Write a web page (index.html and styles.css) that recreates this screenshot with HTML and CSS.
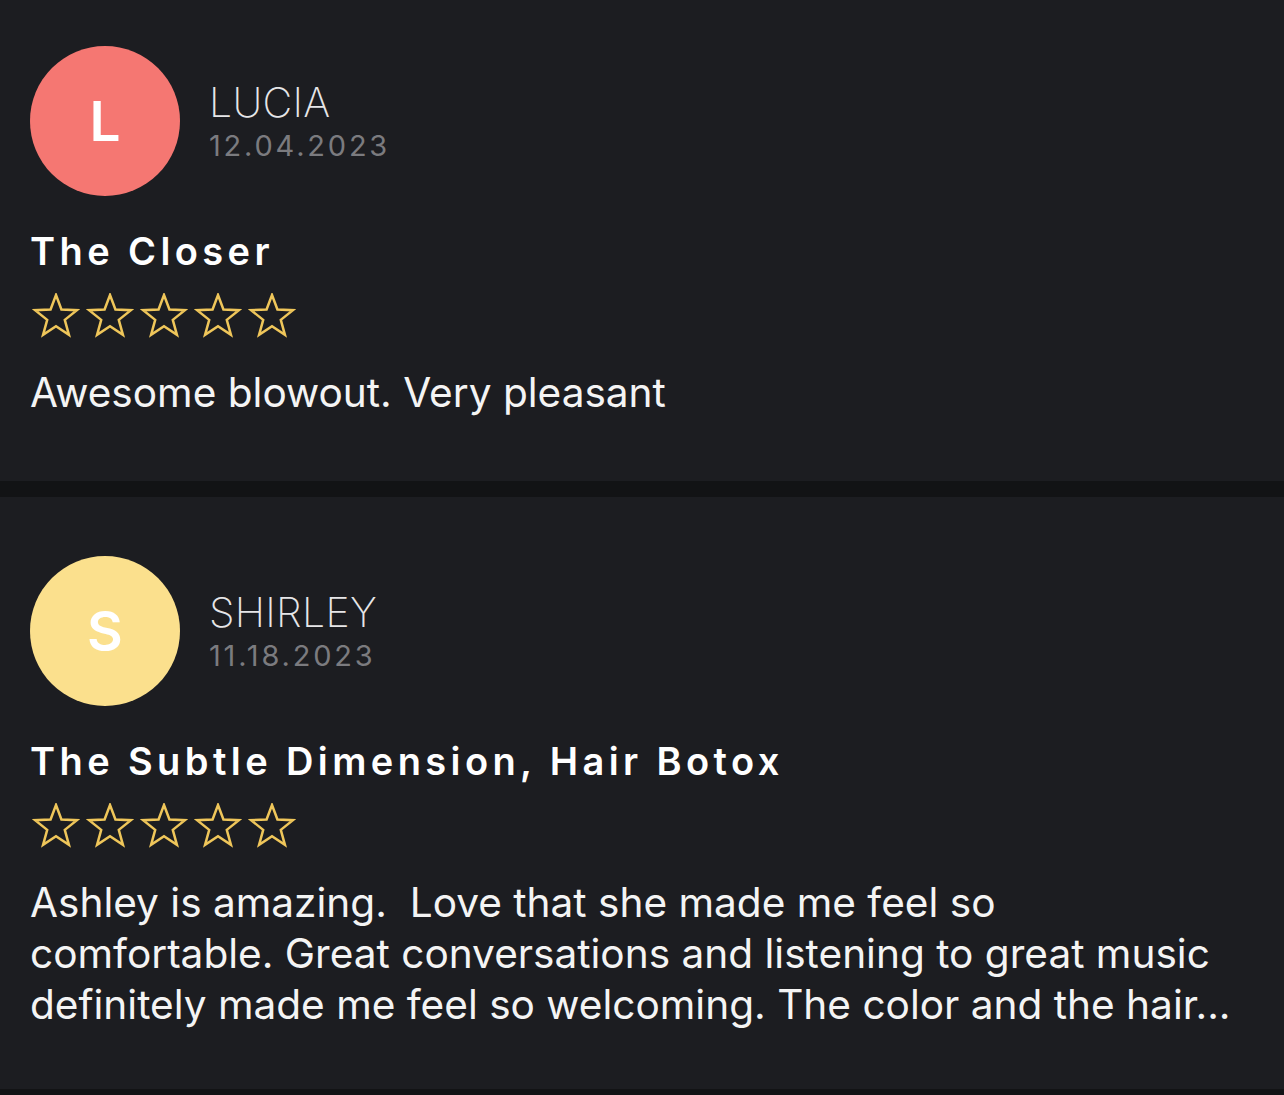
FILE: index.html
```html
<!DOCTYPE html>
<html>
<head>
<meta charset="utf-8">
<link rel="stylesheet" href="styles.css">
</head>
<body>
<div class="list">
  <section class="review first">
    <div class="head">
      <div class="avatar coral">L</div>
      <div class="who">
        <div class="name">LUCIA</div>
        <div class="date">12.04.2023</div>
      </div>
    </div>
    <h2 class="title">The Closer</h2>
    <div class="stars">
      <svg viewBox="0 0 48 46"><path d="M24 2L29.43 16.52L44.92 17.2L32.79 26.86L36.94 41.8L24 33.24L11.06 41.8L15.21 26.86L3.08 17.2L18.57 16.52Z"/></svg>
      <svg viewBox="0 0 48 46"><path d="M24 2L29.43 16.52L44.92 17.2L32.79 26.86L36.94 41.8L24 33.24L11.06 41.8L15.21 26.86L3.08 17.2L18.57 16.52Z"/></svg>
      <svg viewBox="0 0 48 46"><path d="M24 2L29.43 16.52L44.92 17.2L32.79 26.86L36.94 41.8L24 33.24L11.06 41.8L15.21 26.86L3.08 17.2L18.57 16.52Z"/></svg>
      <svg viewBox="0 0 48 46"><path d="M24 2L29.43 16.52L44.92 17.2L32.79 26.86L36.94 41.8L24 33.24L11.06 41.8L15.21 26.86L3.08 17.2L18.57 16.52Z"/></svg>
      <svg viewBox="0 0 48 46"><path d="M24 2L29.43 16.52L44.92 17.2L32.79 26.86L36.94 41.8L24 33.24L11.06 41.8L15.21 26.86L3.08 17.2L18.57 16.52Z"/></svg>
    </div>
    <p class="body">Awesome blowout. Very pleasant</p>
  </section>
  <div class="sep"></div>
  <section class="review">
    <div class="head">
      <div class="avatar yellow">S</div>
      <div class="who">
        <div class="name">SHIRLEY</div>
        <div class="date">11.18.2023</div>
      </div>
    </div>
    <h2 class="title">The Subtle Dimension, Hair Botox</h2>
    <div class="stars">
      <svg viewBox="0 0 48 46"><path d="M24 2L29.43 16.52L44.92 17.2L32.79 26.86L36.94 41.8L24 33.24L11.06 41.8L15.21 26.86L3.08 17.2L18.57 16.52Z"/></svg>
      <svg viewBox="0 0 48 46"><path d="M24 2L29.43 16.52L44.92 17.2L32.79 26.86L36.94 41.8L24 33.24L11.06 41.8L15.21 26.86L3.08 17.2L18.57 16.52Z"/></svg>
      <svg viewBox="0 0 48 46"><path d="M24 2L29.43 16.52L44.92 17.2L32.79 26.86L36.94 41.8L24 33.24L11.06 41.8L15.21 26.86L3.08 17.2L18.57 16.52Z"/></svg>
      <svg viewBox="0 0 48 46"><path d="M24 2L29.43 16.52L44.92 17.2L32.79 26.86L36.94 41.8L24 33.24L11.06 41.8L15.21 26.86L3.08 17.2L18.57 16.52Z"/></svg>
      <svg viewBox="0 0 48 46"><path d="M24 2L29.43 16.52L44.92 17.2L32.79 26.86L36.94 41.8L24 33.24L11.06 41.8L15.21 26.86L3.08 17.2L18.57 16.52Z"/></svg>
    </div>
    <p class="body">Ashley is amazing.  Love that she made me feel so comfortable. Great conversations and listening to great music definitely made me feel so welcoming. The color and the hair...</p>
  </section>
  <div class="sep"></div>
</div>
</body>
</html>
```
FILE: styles.css
```css
html, body {
  margin: 0;
  padding: 0;
  background: #1c1d21;
}
body {
  font-family: Inter, "Liberation Sans", sans-serif;
  color: #f4f4f4;
  height: 1095px;
  overflow: hidden;
}
.list {
  display: flex;
  flex-direction: column;
}
.review {
  padding: 59px 30px 59px 30px;
  background: #1c1d21;
}
.review.first {
  padding-top: 46px;
  padding-bottom: 63px;
}
.sep {
  height: 16px;
  background: #121315;
  flex-shrink: 0;
}
.head {
  display: flex;
  align-items: center;
  gap: 29px;
}
.avatar {
  width: 150px;
  height: 150px;
  border-radius: 50%;
  display: flex;
  align-items: center;
  justify-content: center;
  color: #ffffff;
  font-size: 55px;
  font-weight: 600;
  line-height: 1;
  flex-shrink: 0;
}
.avatar.coral {
  background: #f57772;
}
.avatar.yellow {
  background: #fbe08d;
}
.who {
  display: flex;
  flex-direction: column;
  margin-top: 2px;
}
.name {
  font-size: 41px;
  font-weight: 200;
  line-height: 44px;
  color: #e6e6e8;
  letter-spacing: 0.3px;
}
.date {
  font-size: 29px;
  font-weight: 400;
  line-height: 36px;
  margin-top: 4px;
  color: #7b7b7f;
  letter-spacing: 2.8px;
}
.title {
  margin: 33px 0 0 0;
  font-size: 38px;
  line-height: 44px;
  font-weight: 600;
  letter-spacing: 4.4px;
  color: #ffffff;
}
.stars {
  display: flex;
  gap: 6px;
  margin-top: 20px;
  margin-left: 2px;
}
.stars svg {
  width: 48px;
  height: 46px;
  fill: none;
  stroke: #efc65a;
  stroke-width: 2.5;
}
.body {
  margin: 28px 0 0 0;
  max-width: 1212px;
  font-size: 40.6px;
  line-height: 51px;
  font-weight: 400;
  white-space: pre-wrap;
  color: #f4f4f4;
}
```
